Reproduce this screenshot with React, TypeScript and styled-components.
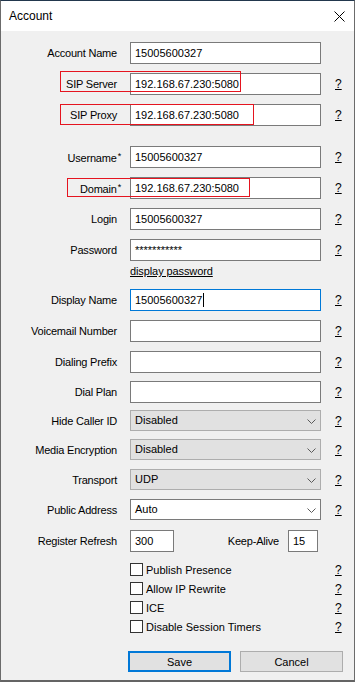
import React from "react";
import styled, { createGlobalStyle } from "styled-components";

const GlobalStyle = createGlobalStyle`
  html, body { margin: 0; padding: 0; background: #ffffff; }
  body { font-family: "Liberation Sans", Arial, sans-serif; color: #000; }
  * { box-sizing: border-box; }
`;

const Window = styled.div`
  position: relative;
  width: 355px;
  height: 682px;
  border-left: 1px solid #6b6b6b;
  border-right: 1px solid #6b6b6b;
  border-top: 1px solid #22374d;
  border-bottom: 2px solid #646464;
  background: #f0f0f0;
  display: flex;
  flex-direction: column;
`;

const TitleBar = styled.div`
  height: 30px;
  background: #ffffff;
  display: flex;
  align-items: center;
  justify-content: space-between;
  padding: 0 9px 0 8px;
  font-size: 12px;
`;

const CloseIcon = styled.svg`
  width: 11px;
  height: 11px;
  margin-top: 1px;
`;

const Body = styled.div`
  display: flex;
  flex-direction: column;
  padding-top: 11px;
`;

const Row = styled.div<{ $mt: number; $h?: number }>`
  display: grid;
  grid-template-columns: 116px 191px auto;
  column-gap: 13px;
  align-items: center;
  height: ${(p) => p.$h ?? 22}px;
  margin-top: ${(p) => p.$mt}px;
`;

const Label = styled.div`
  text-align: right;
  font-size: 11px;
  letter-spacing: -0.2px;
  white-space: nowrap;
`;

const Star = styled.span`
  display: inline-block;
  font-size: 9px;
  vertical-align: 3px;
  margin-left: 1px;
  margin-right: -4px;
`;

const TextBox = styled.div<{ $focus?: boolean }>`
  height: 22px;
  background: #ffffff;
  border: 1px solid ${(p) => (p.$focus ? "#0078d7" : "#7a7a7a")};
  font-size: 11px;
  padding: 4px 0 0 4px;
  white-space: nowrap;
  display: flex;
  align-items: flex-start;
`;

const Caret = styled.span`
  display: inline-block;
  width: 1px;
  height: 14px;
  background: #000;
  margin-left: 1px;
  margin-top: -1px;
`;

const Select = styled.div<{ $white?: boolean }>`
  height: 21px;
  background: ${(p) => (p.$white ? "#ffffff" : "#e1e1e1")};
  border: 1px solid ${(p) => (p.$white ? "#7a7a7a" : "#adadad")};
  font-size: 11px;
  padding: 0 0 0 4px;
  display: flex;
  align-items: center;
  justify-content: space-between;
  padding-bottom: 2px;
`;

const Chevron = styled.svg`
  width: 9px;
  height: 5px;
  margin-right: 4px;
  margin-top: 3px;
`;

const Help = styled.span`
  font-size: 12px;
  text-decoration: underline;
  text-underline-offset: 1px;
  padding-left: 1px;
  color: #000;
`;

const LinkText = styled.span`
  font-size: 11px;
  letter-spacing: -0.1px;
  text-decoration: underline;
  color: #000;
`;

const Split = styled.div`
  display: flex;
  align-items: center;
`;

const SmallBox = styled(TextBox)<{ $w: number }>`
  width: ${(p) => p.$w}px;
  flex: none;
`;

const InlineLabel = styled.span`
  flex: 1;
  text-align: right;
  font-size: 11px;
  letter-spacing: -0.2px;
  margin-right: 9px;
`;

const CheckCell = styled.div`
  display: flex;
  align-items: center;
  font-size: 11px;
`;

const CheckBox = styled.span`
  width: 13px;
  height: 13px;
  border: 1px solid #333333;
  background: #ffffff;
  margin-right: 3px;
  flex: none;
`;

const Buttons = styled.div`
  display: flex;
  justify-content: flex-end;
  gap: 9px;
  padding-right: 11px;
  margin-top: 15px;
`;

const Button = styled.div<{ $primary?: boolean }>`
  width: 103px;
  height: 21px;
  background: #e1e1e1;
  border: ${(p) => (p.$primary ? "2px solid #0078d7" : "1px solid #adadad")};
  font-size: 11px;
  display: flex;
  align-items: center;
  justify-content: center;
`;

const Mark = styled.div<{ $x: number; $y: number; $w: number; $h: number }>`
  position: absolute;
  left: ${(p) => p.$x}px;
  top: ${(p) => p.$y}px;
  width: ${(p) => p.$w}px;
  height: ${(p) => p.$h}px;
  border: 1px solid #e5141f;
  pointer-events: none;
`;

const ChevronDown = () => (
  <Chevron viewBox="0 0 9 5">
    <polyline points="0.5,0.5 4.5,4.5 8.5,0.5" fill="none" stroke="#5a5a5a" strokeWidth="1" />
  </Chevron>
);

type FieldRow = { label: React.ReactNode; value?: string; mt: number; help?: boolean; focus?: boolean };

const TextRow = ({ label, value, mt, help = true, focus }: FieldRow) => (
  <Row $mt={mt}>
    <Label>{label}</Label>
    <TextBox $focus={focus}>
      {value}
      {focus && <Caret />}
    </TextBox>
    {help ? <Help>?</Help> : <span />}
  </Row>
);

const SelectRow = ({ label, value, mt, white }: { label: string; value: string; mt: number; white?: boolean }) => (
  <Row $mt={mt} $h={21}>
    <Label>{label}</Label>
    <Select $white={white}>
      {value}
      <ChevronDown />
    </Select>
    <Help>?</Help>
  </Row>
);

const CheckRow = ({ label, mt }: { label: string; mt: number }) => (
  <Row $mt={mt} $h={19}>
    <span />
    <CheckCell>
      <CheckBox />
      {label}
    </CheckCell>
    <Help>?</Help>
  </Row>
);

export default function App() {
  const ip = "192.168.67.230:5080";
  const num = "15005600327";
  return (
    <>
      <GlobalStyle />
      <Window>
        <TitleBar>
          <span>Account</span>
          <CloseIcon viewBox="0 0 11 11">
            <line x1="0.5" y1="0.5" x2="10.5" y2="10.5" stroke="#000" strokeWidth="1" />
            <line x1="10.5" y1="0.5" x2="0.5" y2="10.5" stroke="#000" strokeWidth="1" />
          </CloseIcon>
        </TitleBar>
        <Body>
          <TextRow label="Account Name" value={num} mt={0} help={false} />
          <TextRow label="SIP Server" value={ip} mt={9} />
          <TextRow label="SIP Proxy" value={ip} mt={9} />
          <TextRow label={<>Username<Star>*</Star></>} value={num} mt={20} />
          <TextRow label={<>Domain<Star>*</Star></>} value={ip} mt={9} />
          <TextRow label="Login" value={num} mt={9} />
          <TextRow label="Password" value="***********" mt={9} />
          <Row $mt={3} $h={14}>
            <span />
            <LinkText>display password</LinkText>
            <span />
          </Row>
          <TextRow label="Display Name" value={num} mt={11} focus />
          <TextRow label="Voicemail Number" mt={9} />
          <TextRow label="Dialing Prefix" mt={9} />
          <TextRow label="Dial Plan" mt={8} />
          <SelectRow label="Hide Caller ID" value="Disabled" mt={7} />
          <SelectRow label="Media Encryption" value="Disabled" mt={8} />
          <SelectRow label="Transport" value="UDP" mt={9} />
          <SelectRow label="Public Address" value="Auto" mt={9} white />
          <Row $mt={10}>
            <Label>Register Refresh</Label>
            <Split>
              <SmallBox $w={44}>300</SmallBox>
              <InlineLabel>Keep-Alive</InlineLabel>
              <SmallBox $w={30}>15</SmallBox>
              <span style={{ width: 3 }} />
            </Split>
            <span />
          </Row>
          <CheckRow label="Publish Presence" mt={8} />
          <CheckRow label="Allow IP Rewrite" mt={0} />
          <CheckRow label="ICE" mt={0} />
          <CheckRow label="Disable Session Timers" mt={0} />
          <Buttons>
            <Button $primary>Save</Button>
            <Button>Cancel</Button>
          </Buttons>
        </Body>
        <Mark $x={59} $y={70} $w={181} $h={21} />
        <Mark $x={59} $y={103} $w={194} $h={21} />
        <Mark $x={66} $y={177} $w={183} $h={19} />
      </Window>
    </>
  );
}
